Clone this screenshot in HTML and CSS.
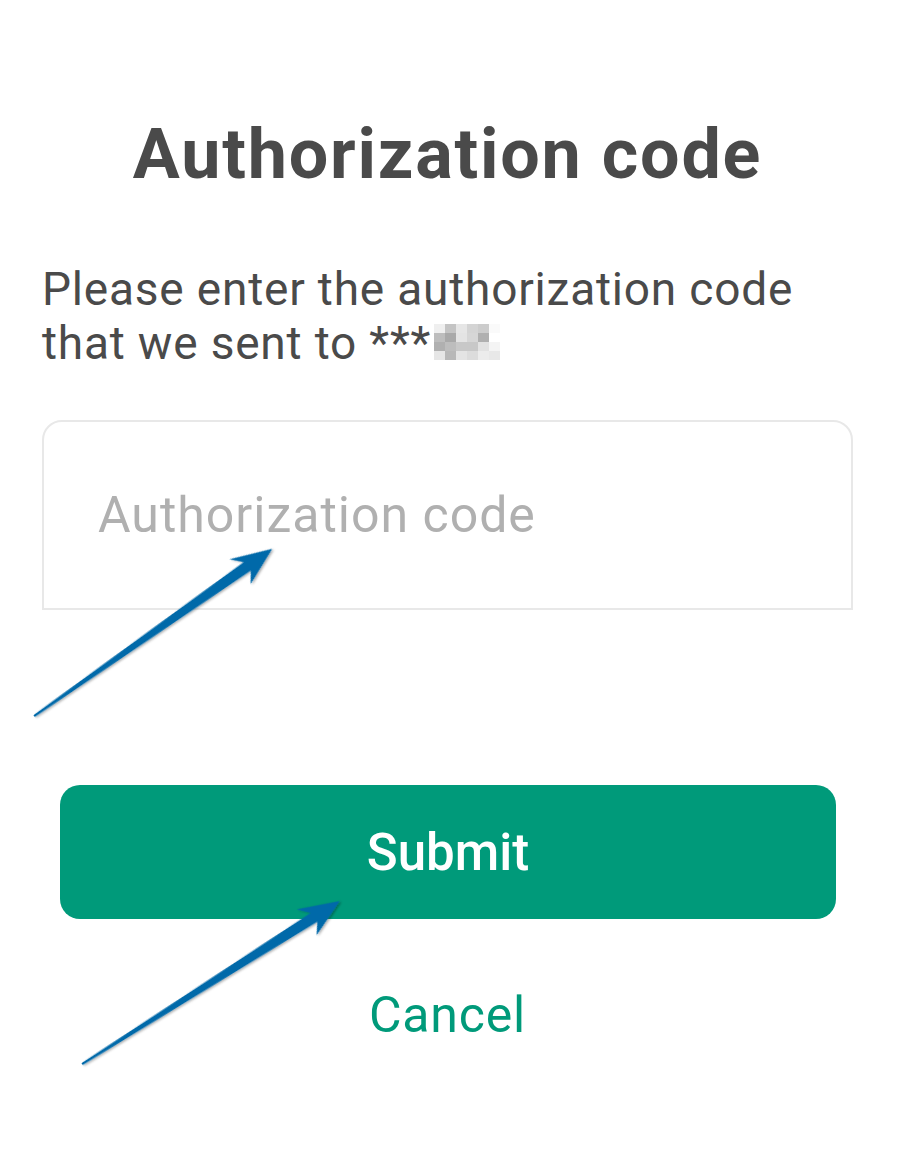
FILE: index.html
```html
<!DOCTYPE html>
<html>
<head>
<meta charset="utf-8">
<link rel="stylesheet" href="styles.css">
</head>
<body>
<div class="page">
  <h1 class="title">Authorization code</h1>
  <p class="intro">Please enter the authorization code that we sent to ***<span class="blur"><i style="background:#efefef"></i><i style="background:#c4c4c4"></i><i style="background:#e6e6e6"></i><i style="background:#d4d4d4"></i><i style="background:#cccccc"></i><i style="background:#fafafa"></i><i style="background:#bdbdbd"></i><i style="background:#a9a9a9"></i><i style="background:#e4e4e4"></i><i style="background:#d6d6d6"></i><i style="background:#b0b0b0"></i><i style="background:#ffffff"></i><i style="background:#b0b0b0"></i><i style="background:#bdbdbd"></i><i style="background:#c8c8c8"></i><i style="background:#c8c8c8"></i><i style="background:#e2e2e2"></i><i style="background:#f4f4f4"></i><i style="background:#e6e6e6"></i><i style="background:#b8b8b8"></i><i style="background:#e4e4e4"></i><i style="background:#dcdcdc"></i><i style="background:#ececec"></i><i style="background:#e8e8e8"></i></span></p>
  <input class="code" type="text" placeholder="Authorization code">
  <button class="submit">Submit</button>
  <a class="cancel">Cancel</a>
</div>
<svg class="arrows" width="901" height="1170" viewBox="0 0 901 1170">
  <defs>
    <filter id="sh" x="-10%" y="-20%" width="120%" height="140%">
      <feDropShadow dx="1" dy="1.5" stdDeviation="1.2" flood-color="#000" flood-opacity="0.35"/>
    </filter>
  </defs>
  <g transform="translate(34 716) rotate(-35.06)" filter="url(#sh)">
    <polygon fill="#0369a9" points="0,-1 260,-5.5 250,-16 291,0 253,16.5 261,5.5 0,1.3"/>
  </g>
  <g transform="translate(82 1064) rotate(-32.3)" filter="url(#sh)">
    <polygon fill="#0369a9" points="0,-1 274,-5.5 264,-16 305,0 267,16.5 275,5.5 0,1.3"/>
  </g>
</svg>
</body>
</html>
```
FILE: styles.css
```css
html, body {
  margin: 0;
  padding: 0;
  background: #ffffff;
}
.page {
  width: 811px;
  margin-left: 42px;
  padding-top: 112px;
  display: flex;
  flex-direction: column;
  font-family: Roboto, "Liberation Sans", sans-serif;
}
.title {
  margin: 0;
  font-size: 70px;
  line-height: 84px;
  font-weight: 700;
  letter-spacing: 1.8px;
  color: #4a4a4a;
  text-align: center;
}
.intro {
  margin: 66px 0 0 0;
  font-size: 46px;
  line-height: 54px;
  font-weight: 400;
  letter-spacing: 0.8px;
  color: #4a4a4a;
}
.blur {
  display: inline-block;
  width: 66px;
  height: 36px;
  margin-left: 3px;
  vertical-align: -1px;
}
.blur i {
  float: left;
  width: 11px;
  height: 9px;
}
.code {
  margin-top: 50px;
  box-sizing: border-box;
  width: 811px;
  height: 190px;
  border: 2px solid #e8e8e8;
  border-radius: 20px 20px 0 0;
  padding: 0 0 0 54px;
  font-family: Roboto, "Liberation Sans", sans-serif;
  font-size: 50px;
  letter-spacing: 1px;
  color: #4a4a4a;
  outline: none;
  background: #fff;
}
.code::placeholder {
  color: #b0b0b0;
}
.submit {
  margin: 175px 17px 0 18px;
  height: 134px;
  border: none;
  border-radius: 20px;
  background: #009a7a;
  color: #ffffff;
  font-family: Roboto, "Liberation Sans", sans-serif;
  font-size: 51px;
  font-weight: 500;
  padding: 0;
}
.cancel {
  margin-top: 66px;
  align-self: center;
  font-size: 50px;
  line-height: 60px;
  letter-spacing: 0.8px;
  color: #009a7a;
}
.arrows {
  position: absolute;
  left: 0;
  top: 0;
  pointer-events: none;
}
```
